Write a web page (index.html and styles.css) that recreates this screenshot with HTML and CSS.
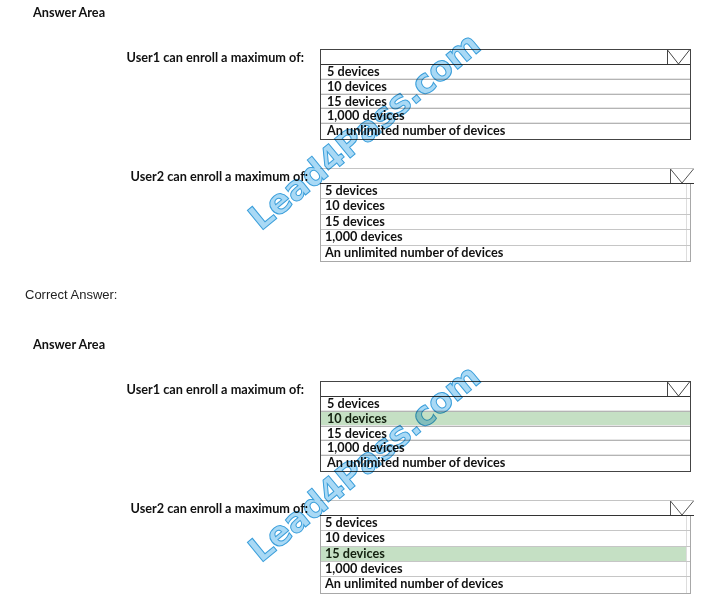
FILE: index.html
```html
<!DOCTYPE html>
<html lang="en">
<head>
<meta charset="utf-8">
<title>Answer Area</title>
<link rel="stylesheet" href="styles.css">
</head>
<body>
<section class="area">
  <div class="watermark">Lead4Pass.com</div>
  <h2 class="area-title">Answer Area</h2>
  <div class="question q1">
    <div class="q-label">User1 can enroll a maximum of:</div>
    <div class="dropdown dd-a">
      <div class="dd-head">
        <svg class="dd-arrow" width="23" height="14" viewBox="0 0 23 14"><path d="M0.5 0V14M0.5 0L11.5 14L22.5 0" fill="none" stroke="#444" stroke-width="1"/></svg>
      </div>
      <ul class="dd-list">
        <li>5 devices</li>
        <li>10 devices</li>
        <li>15 devices</li>
        <li>1,000 devices</li>
        <li>An unlimited number of devices</li>
      </ul>
    </div>
  </div>
  <div class="question q2">
    <div class="q-label">User2 can enroll a maximum of:</div>
    <div class="dropdown dd-b">
      <div class="dd-head">
        <svg class="dd-arrow" width="24" height="14" viewBox="0 0 24 14"><path d="M0.5 0V14M0.5 0L12 14L23.5 0" fill="none" stroke="#555" stroke-width="1"/></svg>
      </div>
      <ul class="dd-list">
        <li>5 devices</li>
        <li>10 devices</li>
        <li>15 devices</li>
        <li>1,000 devices</li>
        <li>An unlimited number of devices</li>
      </ul>
    </div>
  </div>
</section>

<p class="correct">Correct Answer:</p>

<section class="area area-second">
  <div class="watermark">Lead4Pass.com</div>
  <h2 class="area-title">Answer Area</h2>
  <div class="question q1">
    <div class="q-label">User1 can enroll a maximum of:</div>
    <div class="dropdown dd-a">
      <div class="dd-head">
        <svg class="dd-arrow" width="23" height="14" viewBox="0 0 23 14"><path d="M0.5 0V14M0.5 0L11.5 14L22.5 0" fill="none" stroke="#444" stroke-width="1"/></svg>
      </div>
      <ul class="dd-list">
        <li>5 devices</li>
        <li class="selected">10 devices</li>
        <li>15 devices</li>
        <li>1,000 devices</li>
        <li>An unlimited number of devices</li>
      </ul>
    </div>
  </div>
  <div class="question q2">
    <div class="q-label">User2 can enroll a maximum of:</div>
    <div class="dropdown dd-b">
      <div class="dd-head">
        <svg class="dd-arrow" width="24" height="14" viewBox="0 0 24 14"><path d="M0.5 0V14M0.5 0L12 14L23.5 0" fill="none" stroke="#555" stroke-width="1"/></svg>
      </div>
      <ul class="dd-list">
        <li>5 devices</li>
        <li>10 devices</li>
        <li class="selected">15 devices</li>
        <li>1,000 devices</li>
        <li>An unlimited number of devices</li>
      </ul>
    </div>
  </div>
</section>
</body>
</html>
```

FILE: styles.css
```css
html, body {
  margin: 0;
  padding: 0;
  background: #ffffff;
}

body {
  color: #111111;
  font-family: Lato, "Open Sans", "DejaVu Sans", sans-serif;
  font-size: 12.7px;
  font-weight: 700;
}

.area {
  position: relative;
  padding-top: 4px;
}

.area-second {
  margin-top: 30px;
}

.area-title {
  margin: 0 0 0 33px;
  font-size: 12.7px;
  font-weight: 700;
  line-height: 16px;
}

.question {
  display: grid;
  grid-template-columns: 320px auto;
  align-items: start;
}

.q1 {
  margin-top: 29px;
}

.q2 {
  margin-top: 28px;
}

.q-label {
  text-align: right;
  line-height: 15px;
  padding-top: 1px;
}

.q1 .q-label {
  padding-right: 16px;
}

.q2 .q-label {
  padding-right: 12px;
}

.dropdown {
  box-sizing: border-box;
}

.dd-head {
  display: flex;
  justify-content: flex-end;
  height: 14px;
}

.dd-arrow {
  display: block;
}

.dd-list {
  list-style: none;
  margin: 0;
  padding: 0;
}

.dd-list li {
  box-sizing: border-box;
  white-space: nowrap;
  line-height: 13px;
}

/* first dropdown style: framed box */
.dd-a {
  width: 371px;
  border: 1px solid #444444;
}

.dd-a .dd-head {
  border-bottom: 1px solid #333333;
}

.dd-a .dd-list li {
  height: 14.8px;
  padding-left: 6px;
  border-bottom: 1px solid #b4b4b4;
  box-shadow: inset 0 -1px 0 #e6e6e6;
}

.dd-a .dd-list li:last-child {
  border-bottom: 0;
  box-shadow: none;
}

/* second dropdown style: open list */
.dd-b {
  width: 374px;
}

.dd-b .dd-head {
  border-top: 1px solid #c4c4c4;
  border-bottom: 1px solid #333333;
}

.dd-b .dd-list {
  width: 371px;
  box-sizing: border-box;
  border-left: 1px solid #a8a8a8;
  border-right: 1px solid #a8a8a8;
  border-bottom: 1px solid #a8a8a8;
}

.dd-b .dd-list li {
  height: 15.4px;
  padding-left: 4px;
  border-bottom: 1px solid #c6c6c6;
  box-shadow: inset -3px 0 0 #ffffff, inset -4px 0 0 #dddddd;
}

.dd-b .dd-list li:last-child {
  border-bottom: 0;
}

.dd-list li.selected {
  background: #c5e0c4;
  color: #13200f;
}

.correct {
  margin: 26px 0 0 25px;
  font-family: "Liberation Sans", Arial, sans-serif;
  font-weight: 400;
  font-size: 13px;
  line-height: 14px;
  color: #222222;
}

.watermark {
  position: absolute;
  left: 364px;
  top: 131px;
  transform: translate(-50%, -50%) rotate(-39.5deg);
  font-family: "DejaVu Sans", Verdana, sans-serif;
  font-weight: 700;
  font-size: 34px;
  letter-spacing: -0.6px;
  white-space: nowrap;
  color: #a9d9f5;
  -webkit-text-stroke: 1px #3b9fdb;
  mix-blend-mode: multiply;
  pointer-events: none;
  z-index: 2;
}
```
